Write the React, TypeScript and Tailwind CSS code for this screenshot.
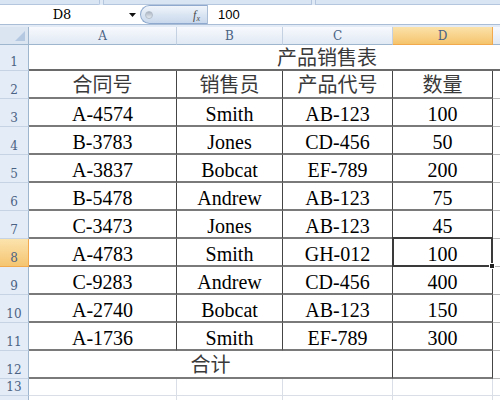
import type { ReactNode } from 'react'

const rows = [
  ['A-4574', 'Smith', 'AB-123', '100'],
  ['B-3783', 'Jones', 'CD-456', '50'],
  ['A-3837', 'Bobcat', 'EF-789', '200'],
  ['B-5478', 'Andrew', 'AB-123', '75'],
  ['C-3473', 'Jones', 'AB-123', '45'],
  ['A-4783', 'Smith', 'GH-012', '100'],
  ['C-9283', 'Andrew', 'CD-456', '400'],
  ['A-2740', 'Bobcat', 'AB-123', '150'],
  ['A-1736', 'Smith', 'EF-789', '300'],
]

const cellText = "font-['Liberation_Serif','Noto_Sans_CJK_SC',serif] text-[20px] leading-[22px]"
const headFont = "font-['DejaVu_Serif',serif] text-[12px] text-[#4a6283]"

function RowHead({ n, active, label = true }: { n: number; active?: boolean; label?: boolean }) {
  return (
    <div
      className={
        'flex items-end justify-center pb-[1px] leading-[14px] border-r border-b ' +
        headFont +
        (active
          ? ' bg-linear-to-b from-[#fbe3ad] to-[#f5c570] border-r-[#f2a94e] border-b-[#f2a94e]'
          : ' bg-[#e4ecf7] border-r-[#9eb6ce] border-b-[#c5d3e5]')
      }
    >
      {label ? n : null}
    </div>
  )
}

function Cell({ children, className = '' }: { children?: ReactNode; className?: string }) {
  return (
    <div
      className={
        'flex items-end justify-center border-r border-b-2 border-r-[#454545] border-b-[#7a7a7a] ' +
        cellText +
        ' ' +
        className
      }
    >
      {children}
    </div>
  )
}

function EdgeCell() {
  return <div className="border-b border-[#b9b9b9]" />
}

export default function App() {
  return (
    <div className="w-[500px] h-[400px] overflow-hidden bg-white">
      {/* ribbon bottom */}
      <div className="h-[5px] flex bg-[#dfe9f5]">
        <div className="w-[100px] border-b border-r border-[#b3c6de] rounded-br-[2px] bg-[#d9e5f3]" />
        <div className="w-[3px]" />
        <div className="w-[209px] border-b border-r border-l border-[#b3c6de] bg-[#d9e5f3]" />
        <div className="w-[3px]" />
        <div className="flex-1 border-b border-l border-[#b3c6de] bg-[#d9e5f3]" />
      </div>

      {/* formula bar */}
      <div className="h-[20px] flex items-center bg-white border-b border-[#a9bdd7]">
        <div className="w-[124px] text-center font-['DejaVu_Serif',serif] text-[13px] text-black leading-none">
          D8
        </div>
        <div className="w-[16px] flex justify-center">
          <svg width="7" height="4" viewBox="0 0 7 4">
            <path d="M0 0h7L3.5 4z" fill="#111" />
          </svg>
        </div>
        <div className="relative w-[67px] h-[19px] rounded-l-full border border-r-0 border-[#8ea9cd] bg-linear-to-b from-[#f1f5fb] via-[#dbe6f3] to-[#c9d8ec] flex items-center">
          <div className="ml-[4px] w-[8px] h-[8px] rounded-full bg-linear-to-b from-[#aab4c2] to-[#e7ecf2] border border-[#b3bdc9]" />
          <span className="ml-auto mr-[7px] font-['Liberation_Serif',serif] italic text-[12px] text-[#4a4a4a] leading-none">
            f<sub className="text-[8px]">x</sub>
          </span>
        </div>
        <div className="h-full border-l border-[#a9bdd7] pl-[10px] flex items-center font-['Liberation_Sans',sans-serif] text-[13px] text-black leading-none">
          100
        </div>
      </div>
      <div className="h-[2px] bg-[#e3ebf6]" />

      {/* sheet */}
      <div className="grid grid-cols-[29px_148px_106px_110px_100px_7px] grid-rows-[18px_26px_repeat(11,28px)_17px_20px]">
        {/* column headers */}
        <div className="relative bg-[#dbe5f2] border-r border-b border-[#9eb6ce]">
          <div className="absolute right-[3px] bottom-[3px] w-0 h-0 border-l-[10px] border-l-transparent border-b-[10px] border-b-[#b4c8e1]" />
        </div>
        {['A', 'B', 'C'].map((c) => (
          <div
            key={c}
            className={'flex items-end justify-center pb-[1px] leading-[14px] bg-linear-to-b from-[#f7f9fd] to-[#e1e9f4] border-r border-r-[#c3d1e3] border-b border-b-[#9eb6ce] ' + headFont}
          >
            {c}
          </div>
        ))}
        <div className={'flex items-end justify-center pb-[1px] leading-[14px] bg-linear-to-b from-[#fbe2aa] to-[#f5c46c] border-r border-b border-[#f2a94e] ' + headFont}>
          D
        </div>
        <div className="bg-linear-to-b from-[#f7f9fd] to-[#e1e9f4] border-b border-[#9eb6ce]" />

        {/* row 1 title */}
        <RowHead n={1} />
        <div className="col-span-5 flex items-end pl-[248px] pb-[1px] border-b-2 border-[#6a6a6a] font-['Noto_Sans_CJK_SC',sans-serif] text-[20px] leading-[22px] text-[#3a3a3a]">
          产品销售表
        </div>

        {/* row 2 headers */}
        <RowHead n={2} />
        {['合同号', '销售员', '产品代号', '数量'].map((h) => (
          <Cell key={h} className="text-[#3a3a3a] pb-[1px]">
            {h}
          </Cell>
        ))}
        <EdgeCell />

        {rows.map((r, i) => {
          const n = i + 3
          return [
            <RowHead key={'h' + n} n={n} active={n === 8} />,
            ...r.map((v, j) => (
              <Cell key={n + '-' + j} className={'text-black' + (n === 8 && j === 3 ? ' relative' : '')}>
                {v}
                {n === 8 && j === 3 && (
                  <div className="absolute -left-[1px] -top-[2px] -right-[1px] -bottom-[2px] border-2 border-[#3a3a3a]">
                    <div className="absolute -right-[4px] -bottom-[4px] w-[6px] h-[6px] bg-[#222] border border-white" />
                  </div>
                )}
              </Cell>
            )),
            <EdgeCell key={'e' + n} />,
          ]
        })}

        {/* row 12 total */}
        <RowHead n={12} />
        <Cell className="col-span-3 text-[#3a3a3a] pb-[1px]">合计</Cell>
        <Cell />
        <EdgeCell />

        {/* row 13 */}
        <RowHead n={13} />
        {[0, 1, 2, 3].map((k) => (
          <div key={k} className="border-r border-b border-[#dadfe7]" />
        ))}
        <div className="border-b border-[#dadfe7]" />

        {/* row 14, only its top edge shows */}
        <RowHead n={14} label={false} />
        {[0, 1, 2, 3].map((k) => (
          <div key={k} className="border-r border-[#dadfe7]" />
        ))}
        <div />
      </div>
    </div>
  )
}
